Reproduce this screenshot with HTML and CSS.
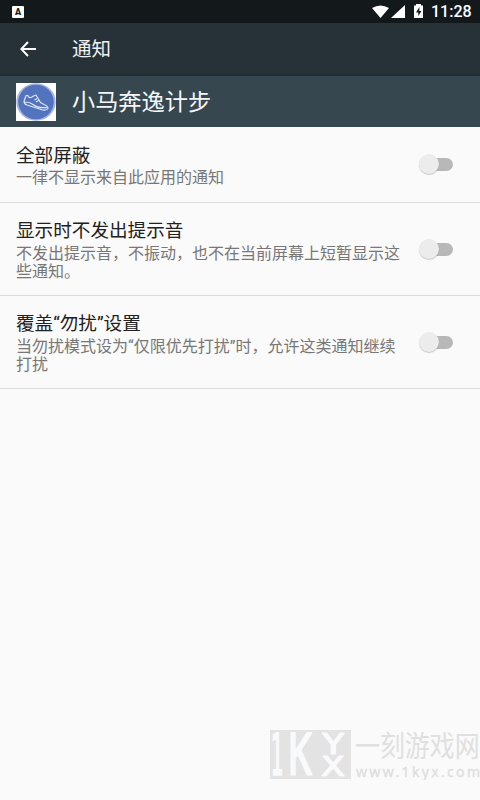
FILE: index.html
```
<!DOCTYPE html>
<html lang="zh-CN">
<head>
<meta charset="utf-8">
<title>通知</title>
<link rel="stylesheet" href="styles.css">
</head>
<body>
<div class="status">
  <span class="ime">A</span>
  <svg class="signals" width="54" height="16" viewBox="0 0 54 16">
    <path d="M0 4Q8.500-1 17 4L8.500 14Z"/>
    <path d="M19 14L33 1V14Z"/>
    <path d="M42 1.500h2V0h5v1.500h2V14h-9Z"/>
    <path class="bolt" d="M47.500 3L44 8.500h2.300V12L49.500 7h-2.200Z"/>
  </svg>
  <span class="clock">11:28</span>
</div>
<header class="toolbar">
  <svg class="back" width="16" height="16" viewBox="0 0 16 16"><path d="M16 8H2M8 1L1.300 8L8 15"/></svg>
  <h1>通知</h1>
</header>
<section class="app">
  <svg class="app-icon" width="40" height="38" viewBox="0 0 40 38">
    <rect width="40" height="38" fill="#fff"/>
    <ellipse cx="20" cy="19" rx="19.700" ry="18.700" fill="#a9b6e2"/>
    <ellipse cx="20" cy="19" rx="17.800" ry="17.200" fill="#5273bd"/>
    <path class="shoe" d="M10 12.500L8 18.500Q8 21 11 22L25 26.500Q30 28 32 25.500Q32 23 28 21.500L24.500 19.500L20 12L17.500 13Q13 16.500 11.800 12.500L10 12.500M8.500 19Q14 19 17 21.500Q22 25.500 31 24.500M18.500 17L21 15.500M20 19L22.500 17.500"/>
  </svg>
  <h2>小马奔逸计步</h2>
</section>
<main>
  <div class="row">
    <div class="copy"><h3>全部屏蔽</h3><p>一律不显示来自此应用的通知</p></div>
    <div class="switch"></div>
  </div>
  <div class="row">
    <div class="copy"><h3>显示时不发出提示音</h3><p>不发出提示音，不振动，也不在当前屏幕上短暂显示这<br>些通知。</p></div>
    <div class="switch"></div>
  </div>
  <div class="row">
    <div class="copy"><h3>覆盖“勿扰”设置</h3><p>当勿扰模式设为“仅限优先打扰”时，允许这类通知继续<br>打扰</p></div>
    <div class="switch"></div>
  </div>
</main>
<div class="watermark">
  <svg width="210" height="50" viewBox="0 0 210 50">
    <rect width="81" height="49" fill="#e3e3e3"/>
    <g class="mark">
      <text transform="translate(.5 45) scale(.700 1.900)" font-size="30">1</text>
      <text transform="translate(18.500 45) scale(1.300 1.900)" font-size="30">K</text>
      <text transform="translate(51.500 23.500) scale(1.400 1)" font-size="28">Y</text>
      <text transform="translate(51.500 45.500) scale(1.400 1)" font-size="27">X</text>
    </g>
    <text class="site" transform="translate(85 26.500) scale(.86 1)" x="0" y="0" font-size="29">一刻游戏网</text>
    <text class="url" x="86" y="47" textLength="124">www.1kyx.com</text>
  </svg>
</div>
</body>
</html>
```
FILE: styles.css
```
* { box-sizing: border-box; }
body {
  margin: 0;
  width: 480px;
  height: 800px;
  position: relative;
  overflow: hidden;
  background: #fafafa;
  font-family: Roboto, "Noto Sans CJK SC", sans-serif;
}
h1, h2, h3, p { margin: 0; font-weight: 400; }
.status {
  height: 23px;
  background: #13181b;
  display: flex;
  align-items: center;
  padding: 0 8px 0 12px;
  color: #fff;
}
.ime {
  width: 12px;
  height: 12px;
  border-radius: 1px;
  background: #fff;
  color: #13181b;
  font-size: 9px;
  line-height: 12px;
  font-weight: 900;
  text-align: center;
}
.signals { margin-left: auto; margin-right: 5px; fill: #fff; }
.signals .bolt { fill: #13181b; }
.clock { font-size: 16px; font-weight: 500; line-height: 23px; width: 41px; white-space: nowrap; }
.toolbar {
  height: 53px;
  background: linear-gradient(#263238 0 48px, #222d33 53px);
  display: flex;
  align-items: center;
  padding: 0 20px 2px;
  color: #fff;
}
.back { fill: none; stroke: #fff; stroke-width: 2; }
.toolbar h1 { margin-left: 36px; padding-top: 2px; font-size: 19.500px; line-height: 28px; color: #eef1f2; }
.app {
  height: 51px;
  background: #37474f;
  display: flex;
  align-items: center;
  padding: 0 16px;
}
.app-icon .shoe { fill: none; stroke: #dfe6f6; stroke-width: 1.200; stroke-linejoin: round; }
.app h2 { margin-left: 16px; font-size: 23.200px; line-height: 34px; color: #f4f6f7; }
.row {
  height: 93px;
  display: flex;
  align-items: center;
  justify-content: space-between;
  padding: 0 27px 0 16px;
  border-bottom: 1px solid #dcdcdc;
}
.row:first-child { height: 76px; }
.copy { white-space: nowrap; }
.row h3 { font-size: 18.600px; line-height: 26px; color: #212121; }
.row p { position: relative; top: 1px; font-size: 16px; line-height: 18px; color: #777; }
.row:first-child p { top: 0; }
.switch {
  width: 30px;
  height: 13px;
  border-radius: 7px;
  background: #b8b8b8;
  position: relative;
}
.switch::before {
  content: "";
  position: absolute;
  left: -4px;
  top: -4px;
  width: 20px;
  height: 20px;
  border-radius: 50%;
  background: #ececec;
  box-shadow: 0 1px 1px #0003;
}
.watermark { position: absolute; left: 270px; top: 730px; }
.watermark svg { display: block; }
.mark text {
  font-family: "DejaVu Sans Mono", monospace;
  fill: #fafafa;
  stroke: #fafafa;
  stroke-width: 1px;
  stroke-linejoin: round;
}
.site { font-family: "Noto Sans CJK SC", sans-serif; fill: #e0e0e0; }
.url { font-family: "Noto Sans", sans-serif; font-size: 14px; fill: #dedede; stroke: #dedede; stroke-width: .3px; }
```
